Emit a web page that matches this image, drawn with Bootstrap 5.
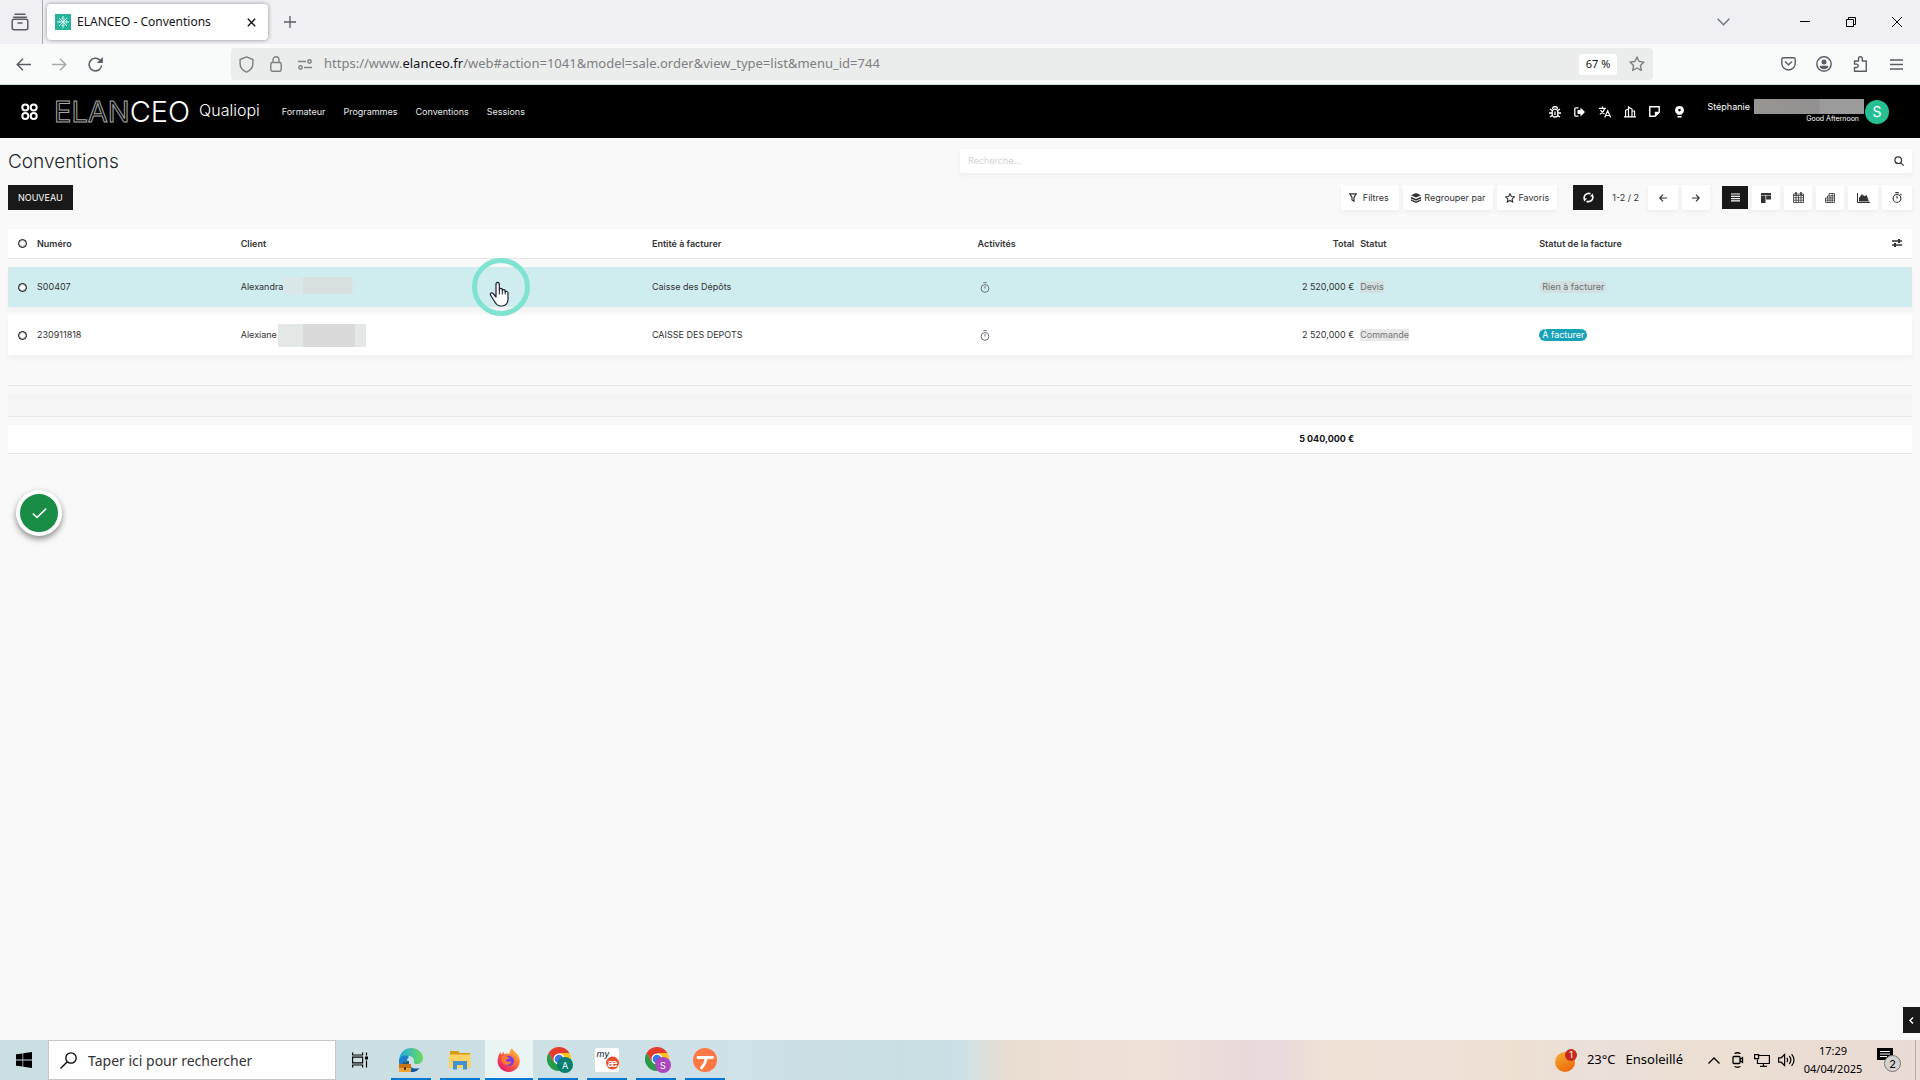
<!DOCTYPE html>
<html lang="fr">
<head>
<meta charset="utf-8">
<meta name="viewport" content="width=device-width, initial-scale=1">
<title>ELANCEO - Conventions</title>
<link href="https://cdn.jsdelivr.net/npm/bootstrap@5.3.0/dist/css/bootstrap.min.css" rel="stylesheet">
<style>
  body { font-family: "Noto Sans", "Open Sans", sans-serif; background: #f9f9f9; color: #15141a; min-height: 100vh; overflow-x: hidden; }
  svg { display: block; flex: none; fill: none; }
  svg:not([stroke]) { stroke: currentColor; }
  svg.solid, .solid { fill: currentColor; stroke: none; }
  button, a { color: inherit; text-decoration: none; }
  .plain { border: 0; background: none; padding: 0; }
  .slot { flex: none; display: flex; align-items: center; justify-content: center; }

  /* browser window */
  .tabstrip { height: 44px; background: #f0f0f4; color: #5b5b66; }
  .tabstrip .firefox-view { width: 43px; height: 44px; border-right: 1px solid #a9a9b0; padding-right: 3px; }
  .tab-active { width: 221px; height: 36px; margin-left: 4px; padding: 0 8px; background: #fff; border-radius: 4px; box-shadow: 0 0 4px rgba(0,0,0,.4); color: #15141a; font-size: 12px; }
  .tab-title { margin-left: 6px; }
  .win-btn { width: 46px; height: 44px; color: #000; }
  .toolbar { height: 41px; background: #f9fbfa; border-bottom: 1px solid #ccdad2; color: #5b5b66; padding: 0 6px 0 5px; }
  .tool-btn { width: 36px; height: 32px; }
  .urlbar { height: 32px; background: #ebedec; border-radius: 4px; font-size: 13px; color: #7d7f82; margin-left: 118px; margin-right: 117px; }
  .urlbar b { font-weight: 400; color: #15141a; }
  .zoom-pill { width: 38px; height: 21px; background: #fff; border-radius: 3px; color: #15141a; font-size: 11px; }

  /* application header */
  .app-bar { height: 53px; background: #000; color: #fff; font-family: Inter, sans-serif; padding: 0 31px 0 21px; }
  .logo { font-size: 29px; font-weight: 300; line-height: 32px; margin-left: 16px; padding-top: 1px; }
  .logo .hollow { color: #000; font-weight: 400; -webkit-text-stroke: 1px #a8a8a8; }
  .section-name { font-size: 16px; line-height: 20px; margin: 0 22px 4px 9px; font-weight: 300; }
  .menu-links { gap: 18px; font-size: 9px; color: #e8e8e8; }
  .sys-btn { width: 25px; height: 24px; }
  .user-box { font-size: 9px; line-height: 12px; margin-left: 15px; }
  .user-box .hidden-name { width: 110px; height: 15px; background: linear-gradient(90deg, #989492, #929090 59%, #9b9b9b 60%); margin: -2px 0 0 4px; }
  .user-box .greeting { font-size: 7px; line-height: 9px; padding-right: 5px; }
  .avatar { width: 24px; height: 24px; background: #26bf94; border-radius: 50%; font-size: 14px; margin-left: 1px; }

  /* list view */
  .view { font-family: Inter, sans-serif; font-size: 9px; line-height: 12px; color: #333; padding: 11px 8px 0; }
  .view h1 { font-size: 19px; line-height: 26px; font-weight: 300; color: #212529; margin: 0; }
  .raised { background: #fff; box-shadow: 0 2px 5px rgba(0,0,0,.05); }
  .search-box { height: 24px; padding: 0 8px; width: 50%; }
  .search-box input { border: 0; outline: 0; background: none; font-size: 9px; padding: 0; color: #333; }
  .search-box input::placeholder { color: #cfd4d8; opacity: 1; }
  .control-row { margin-top: 10px; }
  .tool { height: 25px; border: 0; font-size: 9px; line-height: 12px; padding: 0; display: flex; align-items: center; justify-content: center; gap: 3px; }
  .create { padding: 0 10px; }
  .pager { margin: 0 9px; }
  .w-28 { width: 28px; } .w-30 { width: 30px; } .w-26 { width: 26px; height: 23px; }
  .dark, .dark:hover { background: #191919; color: #fff; }
  .list { width: 100%; table-layout: fixed; border-collapse: separate; border-spacing: 0 8px; margin-top: 11px; }
  .list th, .list td { padding: 0 3px; }
  .list thead tr { height: 30px; }
  .list thead th, .list tfoot td { background: #fff; border-bottom: 1px solid #e6e6e6; font-weight: 600; }
  .list .record { height: 40px; background: #fff; box-shadow: 0 4px 5px rgba(0,0,0,.03); }
  .list .record.hovered { background: #cfecef; }
  .list .spacer { height: 23px; }
  .list .spacer td { border-bottom: 1px solid #e8e8e8; }
  .list .group-end td { background: #f5f5f5; }
  .list tfoot tr { height: 29px; color: #111; }
  .list tfoot td { font-weight: 700; }
  .tick { appearance: none; display: block; width: 9px; height: 9px; border: 1px solid #000; outline: 1px solid rgba(0,0,0,.25); outline-offset: -2px; border-radius: 50%; background: #fff; margin: 0 0 0 7px; }
  .timer { margin-left: 2px; color: #6c757d; }
  .masked { flex: none; width: 72px; height: 17px; background: linear-gradient(90deg, #dae7e8 28%, #d7dfdf 28%, #d7dfdf 96%, #d2e8ea 96%); margin-top: -4px; }
  .masked.tall { width: 88px; height: 23px; background: linear-gradient(90deg, #e3e8e7 28%, #dadada 28%, #dadada 87%, #e3e8e7 87%); margin: 0 0 0 1px; }
  .state { background: #e8e8e8; color: #777; line-height: 12px; display: inline-block; }
  .hovered .state { background: #d3dfdf; color: #667073; }
  .pill { border-radius: 6px; padding: 0 3px; }
  .pill.todo { background: #17a2b8; color: #fff; }

  /* overlays */
  .pointer { position: absolute; left: 472px; top: 120px; }
  .task-done { position: absolute; left: 16px; top: 352px; width: 46px; height: 46px; border-radius: 50%; border: 4px solid #fff; background: #198c45; color: #fff; box-shadow: 0 3px 6px rgba(0,0,0,.45); }
  .side-handle { position: absolute; right: 0; bottom: 7px; width: 17px; height: 26px; }

  /* desktop taskbar */
  .taskbar { height: 40px; color: #000; background: linear-gradient(90deg, #cbdfe3 0, #cce0e4 25%, #cfe0e8 39%, #c8dee0 47%, #cce0e7 50%, #e9ddd0 52.5%, #efe0d7 58%, #efe0d8 60%, #ead9db 65%, #eadadb 67%, #efe1d5 69%, #efe1d8 75%, #eddfd1 79%, #eae0da 83%, #ecdfd2 89%, #e9dad4 100%); }
  .start-btn { width: 48px; height: 40px; }
  .task-search { width: 288px; height: 40px; background: #fff; border: 1px solid #c5c9ca; padding-left: 11px; gap: 11px; }
  .task-search input { border: 0; outline: 0; background: none; width: 220px; font-size: 14px; padding: 0; color: #333; }
  .task-search input::placeholder { color: #333; opacity: 1; }
  .apps { gap: 1px; margin-left: 3px; }
  .app { width: 48px; height: 40px; border: 0; background: none; padding: 0; position: relative; }
  .app::after { content: ""; position: absolute; left: 4px; right: 4px; bottom: 0; height: 2px; background: #0078d4; }
  .app.current { background: #e9f4f4; }
  .app.current::after { left: 0; right: 0; }
  .weather { font-size: 13px; gap: 10px; margin-right: 19px; }
  .tray { width: 24px; height: 40px; }
  .clock { width: 70px; font-size: 11px; line-height: 18px; }
  .notices { margin: 0 14px 0 8px; }
  .show-desktop { width: 5px; height: 40px; border-left: 1px solid #b9aeaa; }
  svg text { stroke: none; font-family: Inter, sans-serif; }
</style>
<script src="https://cdn.jsdelivr.net/npm/bootstrap@5.3.0/dist/js/bootstrap.bundle.min.js"></script>
</head>
<body class="d-flex flex-column">

<div class="tabstrip d-flex align-items-center">
  <button class="plain firefox-view slot" aria-label="Vue d'ensemble"><svg width="18" height="18" viewBox="0 0 18 18" stroke-width="1.5" stroke-linecap="round"><path d="M4 1.2h10M2.5 4.2h13"/><rect x="1.2" y="6.2" width="15.6" height="10.6" rx="2"/><path d="M7 10h4"/></svg></button>
  <div class="tab-active d-flex align-items-center">
    <svg width="16" height="16" viewBox="0 0 16 16" stroke="none"><path fill="#26b39a" d="M0 0h16v16H0z"/><g stroke="#d7fff5" stroke-width="1"><path d="M8 2v12M2 8h12M4 4l8 8M12 4l-8 8"/><circle cx="8" cy="8" r="3.6" stroke-dasharray="1.5 1"/></g></svg>
    <span class="tab-title flex-grow-1 text-nowrap">ELANCEO - Conventions</span>
    <button class="plain slot me-1" aria-label="Fermer l'onglet"><svg width="9" height="9" viewBox="0 0 9 9" stroke-width="1.4"><path d="M.8.8l7.4 7.4M8.2.8L.8 8.2"/></svg></button>
  </div>
  <button class="plain slot ms-3" aria-label="Nouvel onglet"><svg width="12" height="12" viewBox="0 0 12 12" stroke-width="1.3"><path d="M6 0v12M0 6h12"/></svg></button>
  <div class="ms-auto d-flex">
    <button class="plain slot win-btn me-4" aria-label="Lister les onglets"><svg class="text-secondary" width="13" height="8" viewBox="0 0 13 8" stroke-width="1.4"><path d="M.7.7l5.8 6 5.8-6"/></svg></button>
    <span class="ms-2"></span>
    <button class="plain slot win-btn ms-1" aria-label="Réduire"><svg width="10" height="10" viewBox="0 0 10 10"><path d="M0 4.5h10"/></svg></button>
    <button class="plain slot win-btn" aria-label="Restaurer"><svg width="10" height="10" viewBox="0 0 10 10"><path d="M.5 2.5h7v7h-7zM2.5 2.5v-2h7v7h-2"/></svg></button>
    <button class="plain slot win-btn" aria-label="Fermer"><svg width="10" height="10" viewBox="0 0 10 10"><path d="M0 0l10 10M10 0L0 10"/></svg></button>
  </div>
</div>

<div class="toolbar d-flex align-items-center">
  <div class="d-flex">
    <button class="plain slot tool-btn" aria-label="Page précédente"><svg width="15" height="13" viewBox="0 0 15 13" stroke-width="1.5"><path d="M15 6.5H1M7 .7L1.2 6.5 7 12.3"/></svg></button>
    <button class="plain slot tool-btn opacity-50" aria-label="Page suivante"><svg width="15" height="13" viewBox="0 0 15 13" stroke-width="1.5"><path d="M0 6.5h14M8 .7l5.8 5.8L8 12.3"/></svg></button>
    <button class="plain slot tool-btn" aria-label="Actualiser"><svg width="15" height="15" viewBox="0 0 15 15" stroke-width="1.5"><path d="M13.7 8.5A6.3 6.3 0 1 1 11.8 3L14 5"/><path class="solid" d="M14.8 0v6H8.8z"/></svg></button>
  </div>
  <div class="urlbar d-flex align-items-center flex-grow-1">
    <span class="slot ms-2"><svg width="15" height="17" viewBox="0 0 15 17" stroke-width="1.4"><path d="M7.500.9l6.400 2.600v4c0 4-2.400 7-6.400 8.600C3.500 14.500 1.100 11.500 1.100 7.500v-4z" stroke-linejoin="round"/></svg></span>
    <span class="slot ms-3"><svg width="12" height="16" viewBox="0 0 12 16" stroke-width="1.4"><rect x=".8" y="6.500" width="10.400" height="8.700" rx="1.500"/><path d="M3 6.500V3.800a3 3 0 0 1 6 0v2.700"/></svg></span>
    <span class="slot ms-3"><svg width="14" height="11" viewBox="0 0 14 11" stroke-width="1.4"><path d="M0 2.500h8M6 8.500h8"/><circle cx="11.500" cy="2.500" r="1.700"/><circle cx="2.500" cy="8.500" r="1.700"/></svg></span>
    <span class="ms-2 ps-1 flex-grow-1 text-nowrap">https://www.<b>elanceo.fr</b>/web#action=1041&amp;model=sale.order&amp;view_type=list&amp;menu_id=744</span>
    <button class="plain slot zoom-pill">67 %</button>
    <button class="plain slot ms-2 me-1 px-1" aria-label="Marquer cette page"><svg width="16" height="16" viewBox="0 0 16 16" stroke-width="1.4" stroke-linejoin="round"><path d="M8 1l2.100 4.500 4.900.6-3.600 3.400.9 4.900L8 12l-4.300 2.400.9-4.900L1 6.100l4.900-.6z"/></svg></button>
  </div>
  <div class="d-flex">
    <button class="plain slot tool-btn" aria-label="Pocket"><svg width="15" height="14" viewBox="0 0 15 14" stroke-width="1.400"><path d="M2.200.8h10.600a1.400 1.400 0 0 1 1.400 1.400v4.300a6.700 6.500 0 0 1-13.400 0V2.200A1.400 1.400 0 0 1 2.200.8zM4 4.500l3.500 3.300L11 4.500"/></svg></button>
    <button class="plain slot tool-btn" aria-label="Compte"><svg width="16" height="16" viewBox="0 0 16 16" stroke-width="1.400"><circle cx="8" cy="8" r="7.200"/><circle class="solid" cx="8" cy="6" r="2.500"/><path class="solid" d="M3.800 9.800h8.400v1.400a5.200 5.200 0 0 1-8.400 0z"/></svg></button>
    <button class="plain slot tool-btn" aria-label="Extensions"><svg width="15" height="16" viewBox="0 0 15 16" stroke-width="1.400" stroke-linejoin="round"><path d="M1.500 15.200v-3.700h2a1.700 1.700 0 0 0 0-3.400h-2V5h4V2.700a1.900 1.900 0 0 1 3.800 0V5h4v10.200z"/></svg></button>
    <button class="plain slot tool-btn" aria-label="Menu"><svg width="13" height="11" viewBox="0 0 13 11" stroke-width="1.300"><path d="M0 1h13M0 5.500h13M0 10h13"/></svg></button>
  </div>
</div>

<header class="app-bar d-flex align-items-center">
  <button class="plain" aria-label="Applications"><svg width="17" height="18" viewBox="0 0 17 18" stroke-width="2"><circle cx="4.300" cy="4.500" r="3"/><circle cx="12.700" cy="4.500" r="3"/><circle cx="4.300" cy="13" r="3"/><circle cx="12.700" cy="13" r="3"/></svg></button>
  <a href="#" class="logo text-nowrap"><span class="hollow">ELAN</span>CEO</a>
  <span class="section-name">Qualiopi</span>
  <nav class="menu-links d-flex">
    <a href="#">Formateur</a><a href="#">Programmes</a><a href="#">Conventions</a><a href="#">Sessions</a>
  </nav>
  <div class="ms-auto d-flex">
    <button class="plain slot sys-btn" aria-label="Débogage"><svg width="12" height="12" viewBox="0 0 12 12" stroke-width="1.300"><rect x="3.200" y="3.200" width="5.600" height="7.800" rx="2.600"/><path d="M3.500 3a2.500 2.500 0 0 1 5 0M0 7h3M9 7h3M1 3l2.200 1.500M11 3L8.800 4.500M1 11l2.200-1.500M11 11L8.800 9.500M6 5.500v3.500"/></svg></button>
    <button class="plain slot sys-btn" aria-label="Déconnexion"><svg width="11" height="10" viewBox="0 0 11 10" stroke-width="1.300"><path d="M4.500.8H2A1.200 1.200 0 0 0 .8 2v6A1.200 1.200 0 0 0 2 9.200h2.500"/><path class="solid" d="M3.500 3h3V.5L11 5 6.500 9.500V7h-3z"/></svg></button>
    <button class="plain slot sys-btn" aria-label="Langue"><svg width="12" height="12" viewBox="0 0 12 12" stroke-width="1.200"><path d="M0 2.300h7M3.500.5v2M5.800 2.500C5 5 3 7 .8 8.200M1.500 4c1 2 2.500 3.300 4 4M5.700 11.600L8.700 4.800l3 6.800M6.800 9.500h3.900"/></svg></button>
    <button class="plain slot sys-btn" aria-label="Société"><svg width="12" height="12" viewBox="0 0 12 12" stroke-width="1.200"><path d="M0 10.900h12M1.600 10.500V4.300L4.500 3M4.500 10.500V1l3.500 2v7.500M8 5h2.500v5.500"/></svg></button>
    <button class="plain slot sys-btn" aria-label="Notes"><svg width="11" height="11" viewBox="0 0 11 11" stroke-width="1.400"><path d="M.8.800h9.400v5.500l-4 3.900H.800z"/><path class="solid" d="M5.800 5.800h4.700l-4.700 4.700z"/></svg></button>
    <button class="plain slot sys-btn" aria-label="Astuces"><svg width="9" height="12" viewBox="0 0 9 12" stroke="none"><path fill="currentColor" fill-rule="evenodd" d="M4.500 0a4.300 4.300 0 0 1 2.300 8v.8H2.200V8A4.300 4.300 0 0 1 4.500 0zm0 2.800a1.300 1.300 0 1 0 0 2.600 1.300 1.300 0 0 0 0-2.600zM2.500 10h4v1.500h-4z"/></svg></button>
  </div>
  <div class="user-box">
    <div class="d-flex">Stéphanie <span class="hidden-name"></span></div>
    <div class="greeting text-end">Good Afternoon</div>
  </div>
  <div class="avatar slot">S</div>
</header>

<main class="view position-relative flex-grow-1">
  <div class="d-flex justify-content-between">
    <h1>Conventions</h1>
    <div class="search-box raised d-flex align-items-center">
      <input type="text" class="flex-grow-1" placeholder="Recherche..." aria-label="Recherche">
      <button class="plain" aria-label="Lancer la recherche"><svg width="10" height="10" viewBox="0 0 10 10" stroke-width="1.200"><circle cx="4.200" cy="4.200" r="3.300"/><path d="M6.600 6.600l3 3"/></svg></button>
    </div>
  </div>
  <div class="control-row d-flex align-items-center">
    <button class="tool dark create me-auto">NOUVEAU</button>
    <div class="d-flex gap-1 align-items-center">
      <button class="tool raised px-2"><svg width="8" height="9" viewBox="0 0 8 9" stroke-width="1.200"><path d="M.8.800h6.400L5 4.500v3.700L3 7V4.500z"/></svg>&nbsp;Filtres&nbsp;</button>
      <button class="tool raised px-2"><svg width="10" height="10" viewBox="0 0 10 10" stroke-width="1"><path class="solid" d="M5 0l5 2.300L5 4.600 0 2.300z"/><path class="solid" d="M0 3.800l5 2.300 5-2.300v1.600L5 7.700 0 5.400zM0 6.300l5 2.300 5-2.300v1.400L5 10 0 7.700z"/></svg>Regrouper par</button>
      <button class="tool raised px-2"><svg width="10" height="10" viewBox="0 0 16 16" stroke-width="1.800"><path d="M8 1l2.100 4.500 4.900.6-3.600 3.400.9 4.900L8 12l-4.300 2.400.9-4.900L1 6.100l4.900-.6z"/></svg>Favoris</button>
    </div>
    <button class="tool dark w-30 ms-3" aria-label="Actualiser la liste"><svg width="11" height="11" viewBox="0 0 11 11" stroke-width="1.600"><path d="M2.200 8.300A4.100 4.100 0 0 1 4 1.700M8.800 2.700A4.100 4.100 0 0 1 7 9.300M4 1.700A4.100 4.100 0 0 1 7.500 1.800M7 9.300a4.100 4.100 0 0 1-3.500-.100"/><path class="solid" d="M10.300 4.500h-3.500L10 1.500zM.700 6.500h3.500L1 9.500z"/></svg></button>
    <span class="pager">1-2 / 2</span>
    <div class="d-flex gap-1 me-2 pe-1">
      <button class="tool raised w-30" aria-label="Précédent"><svg width="8" height="8" viewBox="0 0 8 8" stroke-width="1.200"><path d="M8 4H1M4 .600L.800 4 4 7.400"/></svg></button>
      <button class="tool raised w-28" aria-label="Suivant"><svg width="8" height="8" viewBox="0 0 8 8" stroke-width="1.200"><path d="M0 4h7M4 .600L7.200 4 4 7.400"/></svg></button>
    </div>
    <div class="d-flex align-items-center gap-1">
      <button class="tool dark w-26" aria-label="Liste"><svg width="9" height="9" viewBox="0 0 9 9" stroke-width="1.200"><path d="M0 1h9M0 3.300h9M0 5.600h9M0 7.900h9"/></svg></button>
      <button class="tool raised w-28" aria-label="Kanban"><svg class="solid" width="10" height="10" viewBox="0 0 10 10"><path d="M0 0h10v2H0zM0 2.500h4.500V10H0zM5.200 2.500H10v4H5.200z"/></svg></button>
      <button class="tool raised w-28" aria-label="Calendrier"><svg width="11" height="11" viewBox="0 0 11 11" stroke-width=".8"><path d="M.5 2h10v8.500H.5zM.5 3.500h10M.5 5.800h10M.5 8.200h10M3 3v7.500M5.500 3v7.500M8 3v7.500"/><path stroke-width="1.500" d="M3 0v3M8 0v3"/></svg></button>
      <button class="tool raised w-28" aria-label="Tableau croisé"><svg width="10" height="10" viewBox="0 0 10 10" stroke-width=".8"><path d="M.5 5v4.500h9v-9H4V3H2.500v2zM.5 7.200h9M2.500 5h7M4 2.800h5.500M2.800 5v4.500M5 3v6.500M7.200.5v9"/></svg></button>
      <button class="tool raised w-30" aria-label="Graphique"><svg width="13" height="10" viewBox="0 0 13 10"><path d="M.5 0v9.500H13"/><path class="solid" d="M2 8.500V5L5 1l2.200 2.200L9.500 2l2.500 6.500z"/></svg></button>
      <button class="tool raised w-30" aria-label="Activité"><svg width="10" height="11" viewBox="0 0 10 11" stroke-width="1.100"><circle cx="5" cy="6.400" r="3.900"/><path d="M3.300.6h3.400M5 4v2.600M8.400 2l1 1"/></svg></button>
    </div>
  </div>

  <table class="list">
    <colgroup><col style="width:26px"><col style="width:10.7%"><col style="width:21.6%"><col style="width:17.1%"><col style="width:7.1%"><col style="width:13%"><col style="width:9.4%"><col><col style="width:27px"></colgroup>
    <thead>
      <tr>
        <th><input type="checkbox" class="tick" aria-label="Tout sélectionner"></th>
        <th>Numéro</th><th>Client</th><th>Entité à facturer</th><th>Activités</th><th class="text-end">Total</th><th>Statut</th><th>Statut de la facture</th>
        <th><button class="plain ms-1" aria-label="Colonnes"><svg width="10" height="8" viewBox="0 0 10 8" stroke-width="1.300"><path d="M0 2h10M0 6h10"/><path stroke-width="2" d="M7 0v4M3 4v4"/></svg></button></th>
      </tr>
    </thead>
    <tbody>
      <tr class="record hovered">
        <td><input type="checkbox" class="tick" aria-label="Sélectionner S00407"></td>
        <td>S00407</td>
        <td><div class="d-flex align-items-center">Alexandra<span class="masked"></span></div></td>
        <td>Caisse des Dépôts</td>
        <td><svg class="timer" width="10" height="11" viewBox="0 0 10 11"><circle cx="5" cy="6.400" r="3.900"/><path d="M3.300.6h3.400M5 4v2.600"/></svg></td>
        <td class="text-end">2 520,000 €</td>
        <td><span class="state">Devis</span></td>
        <td><span class="state pill">Rien à facturer</span></td><td></td>
      </tr>
      <tr class="record">
        <td><input type="checkbox" class="tick" aria-label="Sélectionner 230911818"></td>
        <td>230911818</td>
        <td><div class="d-flex align-items-center">Alexiane<span class="masked tall"></span></div></td>
        <td>CAISSE DES DEPOTS</td>
        <td><svg class="timer" width="10" height="11" viewBox="0 0 10 11"><circle cx="5" cy="6.400" r="3.900"/><path d="M3.300.6h3.400M5 4v2.600"/></svg></td>
        <td class="text-end">2 520,000 €</td>
        <td><span class="state">Commande</span></td>
        <td><span class="state pill todo">À facturer</span></td><td></td>
      </tr>
      <tr class="spacer"><td colspan="9"></td></tr>
      <tr class="spacer group-end"><td colspan="9"></td></tr>
    </tbody>
    <tfoot>
      <tr><td colspan="5"></td><td class="text-end">5 040,000 €</td><td colspan="3"></td></tr>
    </tfoot>
  </table>

  <svg class="pointer" width="58" height="58" viewBox="0 0 58 58"><circle cx="29" cy="29" r="26.500" stroke="#80e3d2" stroke-width="5"/><path fill="#fff" stroke="#1c1c30" stroke-width="1.200" stroke-linejoin="round" d="M24 39V26.500c0-2.700 3.300-2.700 3.300 0V32v-.5c.3-1.700 2.900-1.500 3 .3v.9c.4-1.500 2.800-1.300 2.900.4v1c.6-1.200 2.800-.8 2.800.9v6.500c0 3.500-2.500 6.500-6 6.500h-1.500c-3 0-4.500-2-6-4.500l-4-6.500c-.8-1.800 1.200-2.800 2.600-1.600z"/><path stroke="#1c1c30" stroke-width="1" d="M27.300 32v4.500M30.300 32.500v4M33.200 33.500v3"/></svg>
  <button class="task-done slot p-0" aria-label="Terminé"><svg width="15" height="11" viewBox="0 0 15 11" stroke-width="1.600"><path d="M.8 5.500l4.200 4L14.200.600"/></svg></button>
  <button class="plain side-handle slot dark" aria-label="Ouvrir le panneau"><svg width="5" height="7" viewBox="0 0 5 7" stroke-width="1.400"><path d="M4 .600L1 3.500l3 2.900"/></svg></button>
</main>

<footer class="taskbar d-flex align-items-center">
  <button class="plain slot start-btn" aria-label="Démarrer"><svg class="solid" width="16" height="16" viewBox="0 0 16 16"><path d="M0 2.300l6.500-.9v6.200H0zM7.200 1.300L16 0v7.600H7.200zM0 8.400h6.500v6.200L0 13.700zM7.200 8.400H16V16l-8.800-1.300z"/></svg></button>
  <div class="task-search d-flex align-items-center">
    <svg width="17" height="17" viewBox="0 0 17 17" stroke-width="1.300"><circle cx="11" cy="6" r="5.200"/><path d="M7.300 9.700L.5 16.500"/></svg>
    <input type="text" placeholder="Taper ici pour rechercher" aria-label="Taper ici pour rechercher">
  </div>
  <button class="plain slot start-btn" aria-label="Vue des tâches"><svg width="17" height="16" viewBox="0 0 17 16" stroke-width="1.200"><path d="M.6.500V3h10V.500M.6 15.500V13h10v2.500M.6 5.200h10v5.600H.6zM14.500.500v3M14.500 8.500v7"/><path class="solid" d="M13 4.500h3v3h-3z"/></svg></button>
  <div class="apps d-flex">
    <button class="app slot" aria-label="Edge"><svg width="24" height="24" viewBox="0 0 24 24" stroke="none"><defs><linearGradient id="eg" x2="1"><stop stop-color="#22a7e8"/><stop offset="1" stop-color="#6adc5a"/></linearGradient></defs><path fill="#0c59a4" d="M0 12a12 12 0 0 0 21 8c-6 2-12-1-11-7z"/><path fill="url(#eg)" d="M0 12C1 4 6 0 12 0c7 0 12 5 12 10 0 4-3 6-6 6-4 0-3-2-3-3 0-4-3-5-6-5-4 0-7 2-9 4z"/><path fill="#1b7fcc" d="M0 12c1-4 7-6 10-3-4 3-2 10 4 12C6 25 0 19 0 12z"/><path fill="#c77613" d="M0 16h12v8H0z"/><path fill="#f2a32b" d="M0 20h12v4H0z"/><path fill="#59320b" d="M5 19h2v3H5zM4 14.500h4V16H7v-.700H5v.7H4z"/></svg></button>
    <button class="app slot" aria-label="Explorateur"><svg width="22" height="19" viewBox="0 0 22 19" stroke="none"><path fill="#d99a17" d="M1 0h8l2 2h10v5H1z"/><path fill="#fdd263" d="M0 3.500h21.500V17H0z"/><path fill="#3f93d2" d="M4 18.500V10h14v8.500h-4V14H8v4.500z"/></svg></button>
    <button class="app slot current" aria-label="Firefox"><svg width="24" height="24" viewBox="0 0 24 24" stroke="none"><defs><linearGradient id="ff" x1="1" x2=".2" y2="1"><stop stop-color="#ffe145"/><stop offset=".45" stop-color="#ff7139"/><stop offset="1" stop-color="#e5156f"/></linearGradient></defs><path fill="url(#ff)" d="M15 0c1 3 4 4 6 7 5 8-1 17-9 17C4 24-1 17 1 10c.3-2 1-4 2.500-6L4 6.500 7 4v2.500C9 5 11 5.500 12.500 6c0-2.500 1-4.500 2.500-6z"/><circle cx="12" cy="13" r="5" fill="#7a3ee0"/><path fill="#ff7b35" d="M5 8c3 0 5 0 8 3-3-1-4 1-4 1.500 1 2 4 1.500 5 .500 0 4-4 5-7 3-3-2-3-5-2-8z"/></svg></button>
    <button class="app slot" aria-label="Chrome A"><svg class="ms-1" width="27" height="27" viewBox="0 0 27 27" stroke="none"><path fill="#e33b2e" d="M1.600 6A12 12 0 0 1 22.400 6H12z"/><path fill="#fcc31e" d="M22.400 6A12 12 0 0 1 12 24l5-9L12 6z"/><path fill="#269b48" d="M12 24A12 12 0 0 1 1.600 6L7 15l5 3z"/><path fill="#e33b2e" d="M1.600 6h11L7 15z"/><circle cx="12" cy="12" r="5.500" fill="#fff"/><circle cx="12" cy="12" r="4.300" fill="#3b78e7"/><circle cx="18" cy="18" r="8" fill="#078071"/><text x="18" y="21.500" font-size="9" text-anchor="middle" fill="#fff">A</text></svg></button>
    <button class="app slot" aria-label="myae"><svg width="24" height="24" viewBox="0 0 24 24" stroke="none"><rect width="24" height="24" rx="2" fill="#fff"/><circle cx="17.500" cy="15" r="6.500" fill="#e9512d"/><text x="1.500" y="9" font-size="9" font-style="italic" font-weight="500" fill="#30424e">my</text><text x="17.500" y="18.500" font-size="11" font-weight="600" text-anchor="middle" fill="#fff">æ</text></svg></button>
    <button class="app slot" aria-label="Chrome S"><svg class="ms-1" width="27" height="27" viewBox="0 0 27 27" stroke="none"><path fill="#e33b2e" d="M1.600 6A12 12 0 0 1 22.400 6H12z"/><path fill="#fcc31e" d="M22.400 6A12 12 0 0 1 12 24l5-9L12 6z"/><path fill="#269b48" d="M12 24A12 12 0 0 1 1.600 6L7 15l5 3z"/><path fill="#e33b2e" d="M1.600 6h11L7 15z"/><circle cx="12" cy="12" r="5.500" fill="#fff"/><circle cx="12" cy="12" r="4.300" fill="#3b78e7"/><circle cx="18" cy="18" r="8" fill="#ab47bc"/><text x="18" y="21.500" font-size="9" text-anchor="middle" fill="#fff">S</text></svg></button>
    <button class="app slot" aria-label="Tango"><svg width="24" height="24" viewBox="0 0 24 24" stroke="none"><circle cx="12" cy="12" r="12" fill="#ff7742"/><path stroke="#fff" stroke-width="2.800" stroke-linecap="round" d="M5 9.500h14.500M13.500 10C12.500 15 11 17 8.500 20"/></svg></button>
  </div>
  <div class="weather d-flex align-items-center ms-auto">
    <svg width="22" height="24" viewBox="0 0 22 24" stroke="none"><defs><linearGradient id="sun" x2=".6" y2="1"><stop stop-color="#f6b12c"/><stop offset="1" stop-color="#ee6a10"/></linearGradient></defs><circle cx="10" cy="14" r="10" fill="url(#sun)"/><circle cx="16" cy="7" r="6" fill="#c42b1c"/><text x="16" y="10.200" font-size="9" text-anchor="middle" fill="#fff">1</text></svg>
    <span>23°C</span><span>Ensoleillé</span>
  </div>
  <button class="plain slot tray" aria-label="Icônes cachées"><svg width="12" height="7" viewBox="0 0 12 7" stroke-width="1.300"><path d="M.5 6.500L6 1l5.500 5.500"/></svg></button>
  <button class="plain slot tray" aria-label="Caméra"><svg width="12" height="16" viewBox="0 0 12 16" stroke-width="1.300"><rect x="1" y="4.500" width="7" height="7" rx="1"/><path d="M8 7.500l2.500-1.700v4.500L8 8.800M2.500 1.500c2-1 4-1 6 0M2.500 14.500c2 1 4 1 6 0"/></svg></button>
  <button class="plain slot tray" aria-label="Réseau"><svg width="16" height="13" viewBox="0 0 16 13" stroke-width="1.200"><path d="M5 1.500h10.400v8H3.500V5.500M.6.600h4v4h-4zM9.500 9.500v3M6 12.400h7"/></svg></button>
  <button class="plain slot tray" aria-label="Volume"><svg width="17" height="14" viewBox="0 0 17 14" stroke-width="1.200"><path d="M.6 4.800h2.600L6.600 1.500v11L3.200 9.200H.6zM8.800 4.800c1 1.300 1 3.100 0 4.400M11.200 3c2 2.400 2 5.600 0 8M13.600 1.200c3 3.600 3 8 0 11.600"/></svg></button>
  <div class="clock text-center">17:29<br>04/04/2025</div>
  <button class="plain slot notices" aria-label="Notifications"><svg width="25" height="24" viewBox="0 0 25 24" stroke="none"><path fill="#000" d="M1 0h16v12h-5l-3 3v-3H1z"/><path stroke="#fff" d="M4 3.500h10M4 6h10M4 8.500h7"/><circle cx="16.500" cy="15.500" r="8" fill="#d5d2d0" stroke="#777"/><text x="16.500" y="19.500" font-size="11" text-anchor="middle" fill="#000">2</text></svg></button>
  <div class="show-desktop"></div>
</footer>
</body>
</html>
